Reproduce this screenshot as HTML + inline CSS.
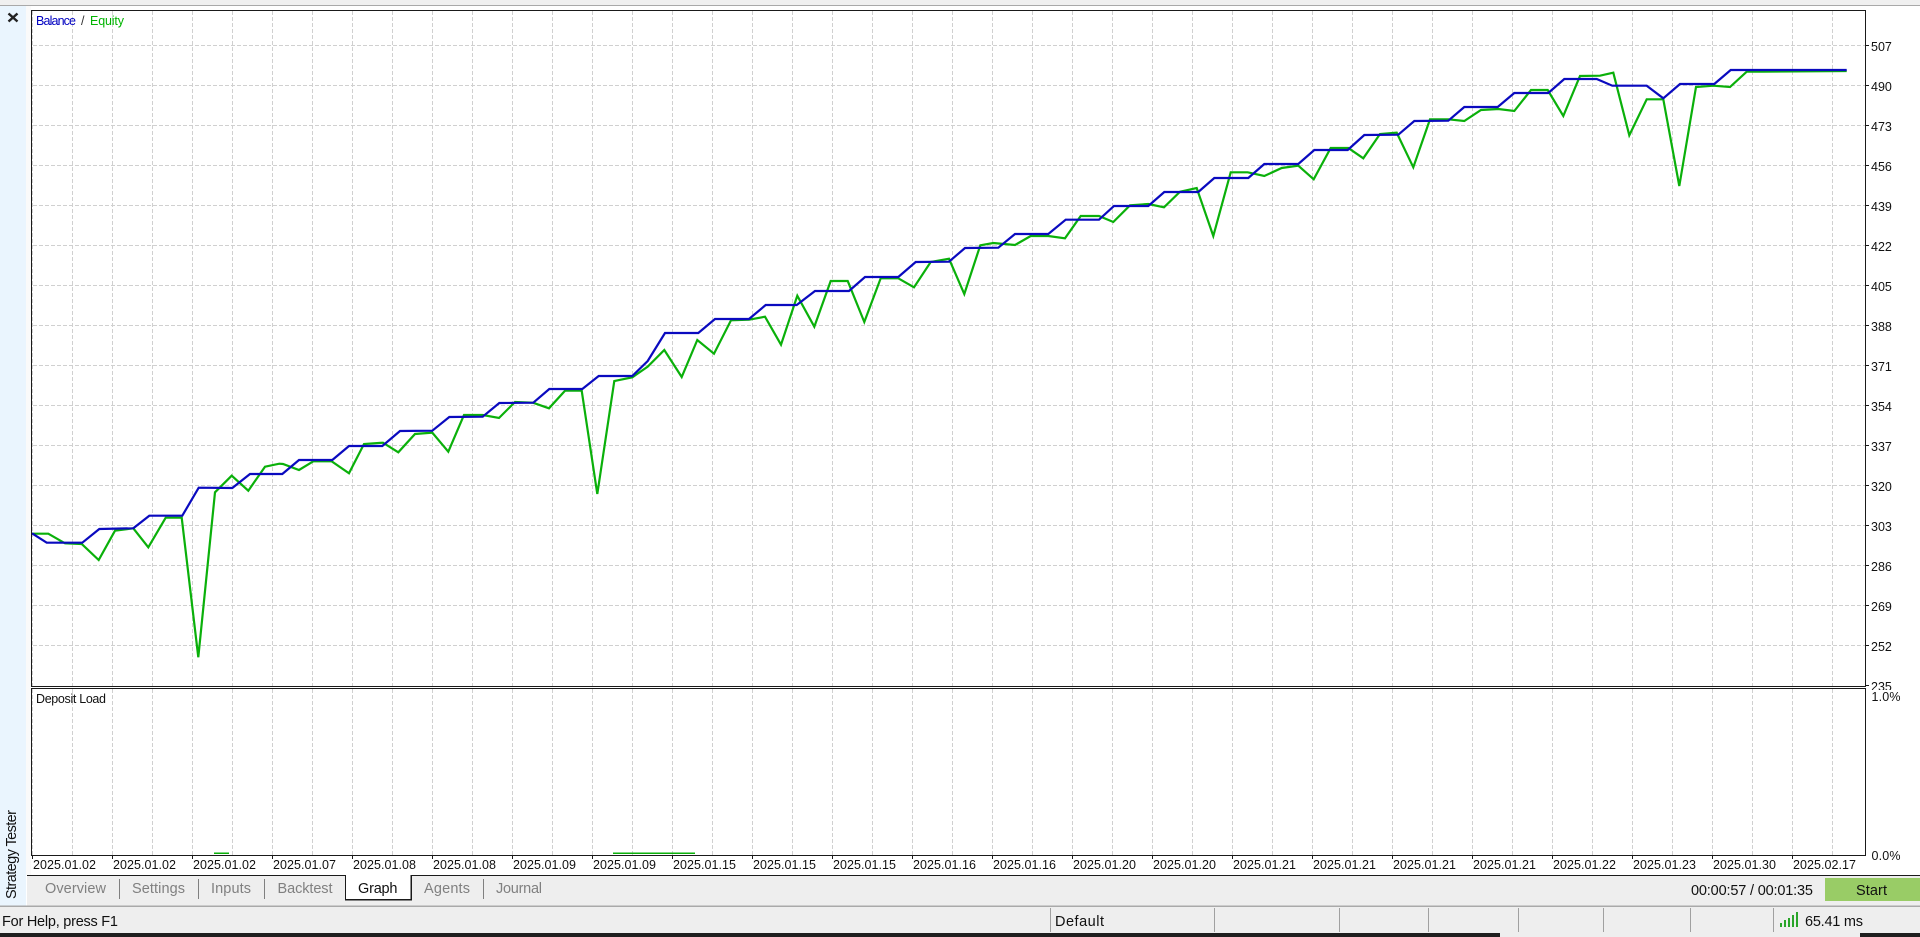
<!DOCTYPE html>
<html><head><meta charset="utf-8"><title>Strategy Tester</title>
<style>
html,body{margin:0;padding:0;background:#fff;width:1920px;height:937px;overflow:hidden}
svg{display:block}
text{font-family:"Liberation Sans",sans-serif;font-size:12.5px;fill:#111}
.t{font-size:14.5px;fill:#808080}
.s{font-size:14.5px;fill:#111}
</style></head><body>
<svg width="1920" height="937" viewBox="0 0 1920 937" xmlns="http://www.w3.org/2000/svg">
<defs>
<pattern id="gv" patternUnits="userSpaceOnUse" x="72" y="11" width="40" height="6"><rect width="1" height="4" fill="#d0d0d0"/></pattern>
<pattern id="gh" patternUnits="userSpaceOnUse" x="33" y="45" width="6" height="40"><rect width="4" height="1" fill="#d0d0d0"/></pattern>
</defs>
<rect width="1920" height="937" fill="#fff"/>
<rect width="1920" height="5" fill="#f0f0f0"/>
<rect y="5" width="1920" height="1" fill="#a9a9a9"/>
<rect y="6" width="26" height="900" fill="#eaf5fe"/>
<rect x="26" y="6" width="5" height="869" fill="#fafafa"/>
<path d="M8.5 13.5L17.5 21.5M17.5 13.5L8.5 21.5" stroke="#222" stroke-width="2.4" fill="none"/>

<!-- grid -->
<rect x="32" y="11" width="1833" height="675" fill="url(#gv)"/>
<rect x="32" y="11" width="1833" height="635" fill="url(#gh)"/>
<rect x="32" y="689" width="1833" height="166" fill="url(#gv)"/>

<!-- equity -->
<polyline fill="none" stroke="#0ab00a" stroke-width="2.2" stroke-linejoin="miter" points="32,533.7 48.3,533.7 65,543.3 81.7,544 98.7,560 115,530.7 133.3,528.3 148.3,547.3 165.7,517.7 181.7,517.7 198.3,657.3 215,492.3 231.7,475.7 248.3,490.7 265,466.7 279.3,463.7 283,464 299,470 313.3,461.3 331.7,461.3 349,473.3 364,444 383,442.7 398.3,452.3 415,434 432.3,432.7 448.3,451.7 464,415 482.7,415 499,418 515,402 533,402.7 549,408.3 565,390.7 581.7,390.7 597.3,494 614.3,381 632.3,377.3 647.7,366.7 664.3,350 681.7,377 697.3,340 714,353.7 731,320.3 749,319.7 765,316.7 781,344.7 797.3,295.7 814.3,326.7 830.7,281 847.7,281 864.3,322 880.7,278.3 898.3,278.3 914,287.3 930.7,262 949,258.7 964.3,294 980.3,245.3 993.3,243 1015,245 1030.7,236 1048.3,236 1065,238.3 1080.7,216 1099,216 1113.3,222 1130,205.3 1148.3,204 1164,207.3 1180,191.7 1196.7,188 1213.3,236 1230.7,172.3 1247.7,172.3 1264.3,176 1281.7,168 1298.3,165.7 1313.7,179.3 1330.7,148 1348.3,148 1363.3,158.3 1380,134 1396.7,132.7 1413.3,167.3 1430,119.3 1448.3,119.3 1464.3,121 1481,110 1498.3,109 1514.3,111 1531,90 1547.7,90 1563.3,116 1580,76 1600,75.7 1613.3,72.7 1629.3,135.3 1646.7,99.3 1663.3,99.3 1679.3,186 1696,87 1713.3,85.7 1730,87 1746.7,71.7 1763,71.7 1846.7,71"/>
<!-- balance -->
<polyline fill="none" stroke="#0a0abf" stroke-width="2.2" points="32,533.3 46.7,542.7 82.3,542.7 99.3,529 133.3,528.3 149.3,515.7 182.3,515.7 198.7,487.7 232.3,488 250,474 282.3,474 299,460 332.3,460 349,446 382.3,446 400,431 432.3,430.7 449.3,417 482.7,416.7 499.3,403 533.3,402.7 549.3,389 582.3,389 598.7,376 632.3,376 647.7,361 665,333 698.3,333 715,319 749,319 765.7,305 796.7,305 815,291 849,291 865,277 898.3,277 915.7,262 949,261.7 965,248 998.3,247.7 1015,234 1048.3,234 1065.7,219.7 1099,219.7 1114,206 1148.3,206 1164.3,192 1198.3,192 1214.3,178 1248.3,178 1264.3,164 1298.3,164 1314.3,150 1347.7,150 1364.3,135 1398.3,134.7 1414.3,121 1448.3,120.7 1464.3,107 1497.7,107 1514.3,93 1548.3,93 1564.3,79 1596.7,79 1612.3,85.7 1646.7,85.7 1663.3,98.3 1680,84 1714.3,84 1730.7,70 1846.7,70"/>

<!-- deposit bars -->
<rect x="214" y="852.5" width="15" height="1.5" fill="#0ab00a"/>
<rect x="613" y="852.5" width="82" height="1.5" fill="#0ab00a"/>

<!-- borders -->
<g fill="#1a1a1a">
<rect x="31" y="10" width="1835" height="1"/>
<rect x="31" y="10" width="1" height="677"/>
<rect x="1865" y="10" width="1" height="677"/>
<rect x="31" y="686" width="1835" height="1"/>
<rect x="31" y="688" width="1835" height="1"/>
<rect x="31" y="688" width="1" height="168"/>
<rect x="1865" y="688" width="1" height="168"/>
<rect x="31" y="855" width="1835" height="1"/>
</g>

<!-- right ticks -->
<path stroke="#1a1a1a" fill="none" d="M1866 45.5h3M1866 85.5h3M1866 125.5h3M1866 165.5h3M1866 205.5h3M1866 245.5h3M1866 285.5h3M1866 325.5h3M1866 365.5h3M1866 405.5h3M1866 445.5h3M1866 485.5h3M1866 525.5h3M1866 565.5h3M1866 605.5h3M1866 645.5h3M1866 685.5h3"/>
<!-- bottom ticks -->
<path stroke="#1a1a1a" fill="none" d="M32.5 856v3M112.5 856v3M192.5 856v3M272.5 856v3M352.5 856v3M432.5 856v3M512.5 856v3M592.5 856v3M672.5 856v3M752.5 856v3M832.5 856v3M912.5 856v3M992.5 856v3M1072.5 856v3M1152.5 856v3M1232.5 856v3M1312.5 856v3M1392.5 856v3M1472.5 856v3M1552.5 856v3M1632.5 856v3M1712.5 856v3M1792.5 856v3"/>

<!-- chart captions -->
<text x="36" y="25" style="fill:#0000c0" textLength="40">Balance</text>
<text x="81" y="25" style="fill:#333">/</text>
<text x="90" y="25" style="fill:#00b400" textLength="34">Equity</text>
<text x="36" y="703" textLength="70">Deposit Load</text>

<!-- y labels -->
<text x="1871" y="51">507</text><text x="1871" y="91">490</text><text x="1871" y="131">473</text><text x="1871" y="171">456</text><text x="1871" y="211">439</text><text x="1871" y="251">422</text><text x="1871" y="291">405</text><text x="1871" y="331">388</text><text x="1871" y="371">371</text><text x="1871" y="411">354</text><text x="1871" y="451">337</text><text x="1871" y="491">320</text><text x="1871" y="531">303</text><text x="1871" y="571">286</text><text x="1871" y="611">269</text><text x="1871" y="651">252</text><text x="1871" y="691">235</text>
<rect x="1867" y="690" width="53" height="14" fill="#fff"/>
<text x="1871.5" y="701" textLength="29">1.0%</text>
<text x="1871.5" y="860" textLength="29">0.0%</text>

<!-- date labels -->
<g>
<text x="33" y="869" textLength="63">2025.01.02</text><text x="113" y="869" textLength="63">2025.01.02</text><text x="193" y="869" textLength="63">2025.01.02</text><text x="273" y="869" textLength="63">2025.01.07</text><text x="353" y="869" textLength="63">2025.01.08</text><text x="433" y="869" textLength="63">2025.01.08</text><text x="513" y="869" textLength="63">2025.01.09</text><text x="593" y="869" textLength="63">2025.01.09</text><text x="673" y="869" textLength="63">2025.01.15</text><text x="753" y="869" textLength="63">2025.01.15</text><text x="833" y="869" textLength="63">2025.01.15</text><text x="913" y="869" textLength="63">2025.01.16</text><text x="993" y="869" textLength="63">2025.01.16</text><text x="1073" y="869" textLength="63">2025.01.20</text><text x="1153" y="869" textLength="63">2025.01.20</text><text x="1233" y="869" textLength="63">2025.01.21</text><text x="1313" y="869" textLength="63">2025.01.21</text><text x="1393" y="869" textLength="63">2025.01.21</text><text x="1473" y="869" textLength="63">2025.01.21</text><text x="1553" y="869" textLength="63">2025.01.22</text><text x="1633" y="869" textLength="63">2025.01.23</text><text x="1713" y="869" textLength="63">2025.01.30</text><text x="1793" y="869" textLength="63">2025.02.17</text>
</g>

<!-- tab bar -->
<rect x="27" y="875" width="1893" height="31" fill="#eeeeee"/>
<rect x="27" y="875" width="1893" height="1" fill="#1a1a1a"/>
<rect x="346" y="875" width="65" height="24" fill="#fff"/>
<rect x="345" y="875" width="1" height="25" fill="#1a1a1a"/>
<rect x="345" y="899" width="67" height="1.5" fill="#1a1a1a"/>
<rect x="410.5" y="875" width="1.5" height="25" fill="#1a1a1a"/>
<path stroke="#808080" fill="none" d="M119.5 879v20M198.5 879v20M264.5 879v20M483.5 879v20"/>
<text class="t" x="45" y="893" textLength="61">Overview</text>
<text class="t" x="132" y="893" textLength="53">Settings</text>
<text class="t" x="211" y="893" textLength="40">Inputs</text>
<text class="t" x="277.5" y="893" textLength="55">Backtest</text>
<text class="s" x="358" y="893" textLength="39.5">Graph</text>
<text class="t" x="424" y="893" textLength="46">Agents</text>
<text class="t" x="496" y="893" textLength="46">Journal</text>
<text class="s" x="1691" y="895" textLength="122">00:00:57 / 00:01:35</text>
<rect x="1825" y="878" width="95" height="23" fill="#99cc66"/>
<text class="s" x="1856" y="895" textLength="31">Start</text>

<text class="s" transform="translate(16,899) rotate(-90)" textLength="89">Strategy Tester</text>

<!-- status bar -->
<rect y="906" width="1920" height="27" fill="#eeeeee"/>
<rect y="905.5" width="1920" height="1.5" fill="#a9a9a9"/>
<path stroke="#a0a0a0" fill="none" d="M1050.5 908v24M1214.5 908v24M1339.5 908v24M1428.5 908v24M1518.5 908v24M1603.5 908v24M1690.5 908v24M1773.5 908v24"/>
<text class="s" x="2" y="926" textLength="116">For Help, press F1</text>
<text class="s" x="1055" y="926" textLength="49">Default</text>
<g fill="#2aa52a"><rect x="1780" y="923" width="2" height="4"/><rect x="1784" y="920" width="2" height="7"/><rect x="1788" y="918" width="2" height="9"/><rect x="1792" y="915" width="2" height="12"/><rect x="1796" y="912" width="2" height="15"/></g>
<text class="s" x="1805" y="926" textLength="58">65.41 ms</text>

<!-- bottom band -->
<rect y="933" width="1920" height="4" fill="#1e1e1e"/>
<rect x="1500" y="933" width="360" height="4" fill="#eeeeee"/>
</svg>
</body></html>
